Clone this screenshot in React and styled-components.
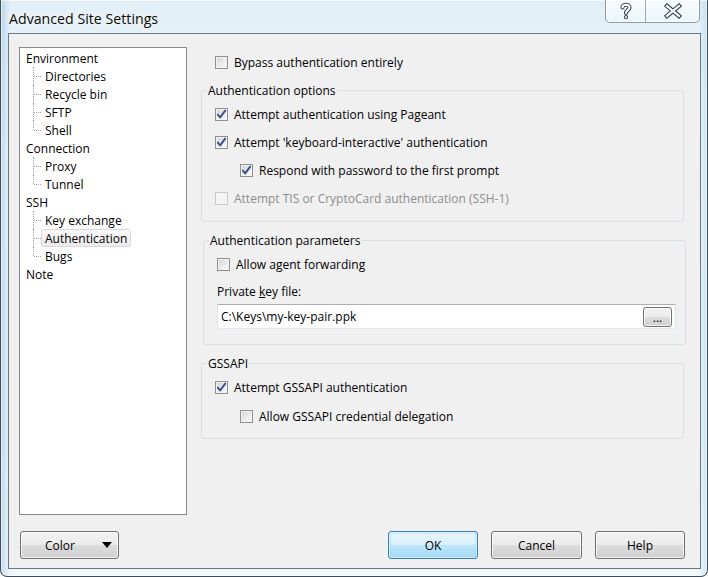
import React from 'react'
import styled, { createGlobalStyle, css } from 'styled-components'

const GlobalStyle = createGlobalStyle`
  html, body {
    margin: 0;
    padding: 0;
    background: #ffffff;
    overflow: hidden;
  }
  body {
    font-family: "Open Sans", "Liberation Sans", sans-serif;
    font-size: 12px;
    color: #000;
  }
`

const Window = styled.div`
  width: 708px;
  height: 577px;
  box-sizing: border-box;
  display: flex;
  flex-direction: column;
  padding: 0 6px 7px 7px;
  border: 1px solid #3f4c59;
  border-top: none;
  border-radius: 0 0 7px 7px;
  background:
    linear-gradient(90deg, rgba(110, 165, 210, 0.35) 0px, rgba(255, 255, 255, 0) 9px),
    linear-gradient(270deg, rgba(140, 200, 225, 0.35) 0px, rgba(255, 255, 255, 0) 8px),
    linear-gradient(180deg, #e2eff6 0%, #edf6fa 30%, #e8f3f8 70%, #f1f8fb 100%);
  box-shadow: inset 0 0 0 1px rgba(255, 255, 255, 0.6);
`

const TitleBar = styled.div`
  height: 33px;
  flex: none;
  display: flex;
  align-items: flex-start;
  justify-content: space-between;
`

const Title = styled.div`
  margin: 9px 0 0 1px;
  font-size: 14.2px;
  line-height: 20px;
  color: #0a0a0a;
  text-shadow: 0 0 6px #fff, 0 0 10px #fff;
`

const CaptionGroup = styled.div`
  display: flex;
  margin-right: 1px;
  border: 1px solid rgba(55, 75, 95, 0.55);
  border-top: none;
  border-radius: 0 0 5px 5px;
  overflow: hidden;
  background: linear-gradient(180deg, rgba(255, 255, 255, 0.75), rgba(255, 255, 255, 0.35));
  box-shadow: inset 0 0 0 1px rgba(255, 255, 255, 0.7);
`

const CaptionButton = styled.div`
  width: ${(p) => p.$w}px;
  height: 22px;
  display: flex;
  align-items: center;
  justify-content: center;
  ${(p) =>
    p.$divider &&
    css`
      border-right: 1px solid rgba(55, 75, 95, 0.45);
    `}
`

const Client = styled.div`
  flex: 1;
  display: flex;
  flex-direction: column;
  border: 1px solid #6b7986;
  background: #f0f0f0;
  padding: 13px 15px 9px 10px;
`

const Main = styled.div`
  display: flex;
  gap: 14px;
  height: 468px;
`

const Tree = styled.div`
  width: 168px;
  flex: none;
  box-sizing: border-box;
  border: 1px solid #828790;
  background: #fff;
  padding-top: 1px;
`

const TreeRow = styled.div`
  position: relative;
  height: 18px;
  display: flex;
  align-items: center;
  padding-left: ${(p) => (p.$child ? 21 : 2)}px;

  ${(p) =>
    p.$child &&
    css`
      &::before {
        content: '';
        position: absolute;
        left: 13px;
        top: 0;
        height: ${p.$last ? 9 : 18}px;
        border-left: 1px dotted #a3a3a3;
      }
      &::after {
        content: '';
        position: absolute;
        left: 14px;
        top: 9px;
        width: 7px;
        border-top: 1px dotted #a3a3a3;
      }
    `}
`

const TreeLabel = styled.span`
  height: 18px;
  box-sizing: border-box;
  display: inline-block;
  padding: 1px 3px 0;
  border: 1px solid transparent;
  border-radius: 2px;
  line-height: 15px;
  white-space: nowrap;

  ${(p) =>
    p.$selected &&
    css`
      border-color: #d9d9d9;
      background: linear-gradient(180deg, #fafafa 0%, #ebebeb 100%);
    `}
`

const RightPanel = styled.div`
  flex: 1;
  display: flex;
  flex-direction: column;
  padding-top: 5px;
`

const CheckRow = styled.label`
  height: 20px;
  display: flex;
  align-items: center;
  gap: 6px;
  padding-left: ${(p) => p.$indent || 0}px;
  color: ${(p) => (p.$disabled ? '#8d8d8d' : '#000')};
  line-height: 15px;
  white-space: nowrap;
`

const Box = styled.span`
  width: 13px;
  height: 13px;
  flex: none;
  box-sizing: border-box;
  display: flex;
  align-items: center;
  justify-content: center;
  border: 1px solid ${(p) => (p.$disabled ? '#c9c9c9' : '#8e8f8f')};
  background: ${(p) =>
    p.$disabled
      ? '#f4f4f4'
      : 'linear-gradient(135deg, #cdd0d4 0%, #e6e7e8 45%, #fbfbfb 100%)'};
  box-shadow: inset 0 0 0 1px ${(p) => (p.$disabled ? '#f4f4f4' : '#f3f3f3')};
`

const Group = styled.div`
  margin-top: ${(p) => p.$top}px;
  margin-left: ${(p) => p.$shift || 0}px;
  margin-right: ${(p) => 1 - (p.$shift || 0)}px;
  border: 1px solid #d5dfe5;
  border-radius: 3px;
  padding: 0 9px ${(p) => p.$bottom}px 13px;
`

const Caption = styled.div`
  width: fit-content;
  margin: -8px 0 0 -8px;
  padding: 0 1px;
  line-height: 15px;
  background: #f0f0f0;
`

const Rows = styled.div`
  display: flex;
  flex-direction: column;
  gap: ${(p) => p.$gap}px;
  padding-top: ${(p) => p.$top}px;
`

const FieldLabel = styled.div`
  margin-top: 10px;
  line-height: 15px;
`

const FileInput = styled.div`
  margin-top: 5px;
  height: 25px;
  box-sizing: border-box;
  display: flex;
  align-items: center;
  padding: 0 3px;
  border: 1px solid;
  border-color: #abadb3 #dbdfe6 #e3e9ef #e2e3ea;
  background: #fff;
`

const FileText = styled.span`
  flex: 1;
  line-height: 15px;
`

const buttonLook = css`
  box-sizing: border-box;
  border: 1px solid #707070;
  border-radius: 3px;
  background: linear-gradient(180deg, #f2f2f2 0%, #ebebeb 48%, #dddddd 52%, #cfcfcf 100%);
  box-shadow: inset 0 0 0 1px rgba(255, 255, 255, 0.75);
  font-family: inherit;
  font-size: 12px;
  color: #000;
`

const SmallButton = styled.div`
  ${buttonLook}
  width: 29px;
  height: 20px;
  display: flex;
  align-items: center;
  justify-content: center;
  line-height: 12px;
  padding-top: 2px;
`

const BottomRow = styled.div`
  margin-top: 16px;
  height: 28px;
  display: flex;
  gap: 13px;
`

const Button = styled.div`
  ${buttonLook}
  width: ${(p) => p.$w}px;
  height: 28px;
  display: flex;
  align-items: center;
  justify-content: center;
  line-height: 15px;

  ${(p) =>
    p.$default &&
    css`
      border-color: #3c7fb1;
      background: linear-gradient(180deg, #eaf6fd 0%, #d9f0fc 48%, #bee6fd 52%, #a7d9f5 100%);
      box-shadow: inset 0 0 0 1px rgba(255, 255, 255, 0.55), inset 0 0 2px 1px #8fd0f2;
    `}
`

const ColorButton = styled(Button)`
  margin-left: 1px;
  justify-content: space-between;
  padding: 0 6px 0 24px;
`

const Spacer = styled.div`
  flex: 1;
`

const Arrow = styled.span`
  width: 0;
  height: 0;
  border-left: 5px solid transparent;
  border-right: 5px solid transparent;
  border-top: 6px solid #000;
`

const CheckMark = () => (
  <svg width="11" height="11" viewBox="0 0 11 11">
    <path
      d="M1.8 5.6 L4.2 8.4 L9.2 1.6"
      fill="none"
      stroke="#3c4f86"
      strokeWidth="1.9"
      strokeLinecap="round"
      strokeLinejoin="round"
    />
  </svg>
)

const Check = ({ label, checked, disabled, indent }) => (
  <CheckRow $disabled={disabled} $indent={indent}>
    <Box $disabled={disabled}>{checked && <CheckMark />}</Box>
    {label}
  </CheckRow>
)

const HelpGlyph = () => (
  <svg width="14" height="18" viewBox="0 0 14 18">
    <g fill="none" strokeLinecap="round" strokeLinejoin="round">
      <path d="M3.5 5.5 C3.5 1.8, 10.5 1.8, 10.5 5.5 C10.5 8, 7 8.3, 7 11" stroke="#3a4652" strokeWidth="4.2" />
      <path d="M7 15 L7 15.2" stroke="#3a4652" strokeWidth="4.2" />
      <path d="M3.5 5.5 C3.5 1.8, 10.5 1.8, 10.5 5.5 C10.5 8, 7 8.3, 7 11" stroke="#ffffff" strokeWidth="2" />
      <path d="M7 15 L7 15.2" stroke="#ffffff" strokeWidth="2" />
    </g>
  </svg>
)

const CloseGlyph = () => (
  <svg width="20" height="16" viewBox="0 0 20 16">
    <g strokeLinecap="square">
      <path d="M4 3 L16 13 M16 3 L4 13" stroke="#3a4652" strokeWidth="4.4" />
      <path d="M4 3 L16 13 M16 3 L4 13" stroke="#ffffff" strokeWidth="2.2" />
    </g>
  </svg>
)

const tree = [
  { label: 'Environment', children: ['Directories', 'Recycle bin', 'SFTP', 'Shell'] },
  { label: 'Connection', children: ['Proxy', 'Tunnel'] },
  { label: 'SSH', children: ['Key exchange', 'Authentication', 'Bugs'] },
  { label: 'Note', children: [] }
]

const selected = 'Authentication'

export default function App() {
  return (
    <>
      <GlobalStyle />
      <Window>
        <TitleBar>
          <Title>Advanced Site Settings</Title>
          <CaptionGroup>
            <CaptionButton $w={39} $divider>
              <HelpGlyph />
            </CaptionButton>
            <CaptionButton $w={53}>
              <CloseGlyph />
            </CaptionButton>
          </CaptionGroup>
        </TitleBar>

        <Client>
          <Main>
            <Tree>
              {tree.map((node) => (
                <React.Fragment key={node.label}>
                  <TreeRow>
                    <TreeLabel $selected={node.label === selected}>{node.label}</TreeLabel>
                  </TreeRow>
                  {node.children.map((child, i) => (
                    <TreeRow key={child} $child $last={i === node.children.length - 1}>
                      <TreeLabel $selected={child === selected}>{child}</TreeLabel>
                    </TreeRow>
                  ))}
                </React.Fragment>
              ))}
            </Tree>

            <RightPanel>
              <Check label="Bypass authentication entirely" indent={14} />

              <Group $top={18} $bottom={13}>
                <Caption>Authentication options</Caption>
                <Rows $gap={8} $top={6}>
                  <Check label="Attempt authentication using Pageant" checked />
                  <Check label="Attempt 'keyboard-interactive' authentication" checked />
                  <Check label="Respond with password to the first prompt" checked indent={25} />
                  <Check label="Attempt TIS or CryptoCard authentication (SSH-1)" disabled />
                </Rows>
              </Group>

              <Group $top={18} $bottom={15} $shift={2}>
                <Caption>Authentication parameters</Caption>
                <Rows $gap={0} $top={6}>
                  <Check label="Allow agent forwarding" />
                </Rows>
                <FieldLabel>
                  Private <u>k</u>ey file:
                </FieldLabel>
                <FileInput>
                  <FileText>C:\Keys\my-key-pair.ppk</FileText>
                  <SmallButton>...</SmallButton>
                </FileInput>
              </Group>

              <Group $top={18} $bottom={12}>
                <Caption>GSSAPI</Caption>
                <Rows $gap={9} $top={6}>
                  <Check label="Attempt GSSAPI authentication" checked />
                  <Check label="Allow GSSAPI credential delegation" indent={25} />
                </Rows>
              </Group>
            </RightPanel>
          </Main>

          <BottomRow>
            <ColorButton $w={99}>
              Color
              <Arrow />
            </ColorButton>
            <Spacer />
            <Button $w={90} $default>
              OK
            </Button>
            <Button $w={91}>Cancel</Button>
            <Button $w={90}>Help</Button>
          </BottomRow>
        </Client>
      </Window>
    </>
  )
}
